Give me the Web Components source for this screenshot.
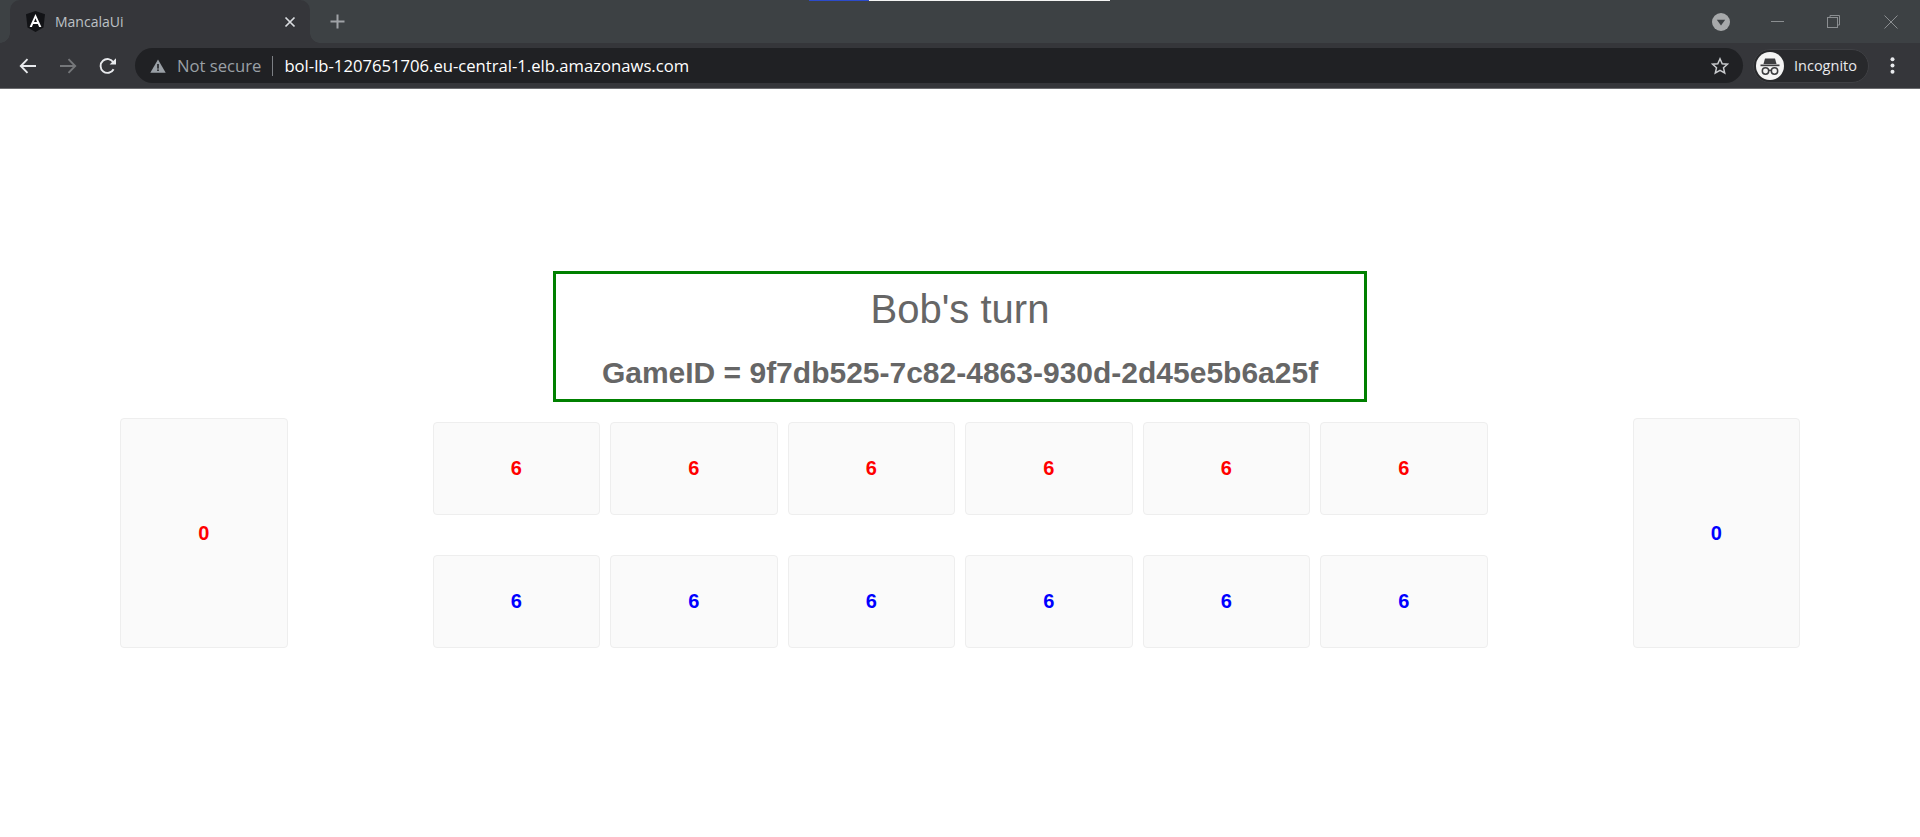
<!DOCTYPE html>
<html lang="en">
<head>
<meta charset="utf-8">
<title>MancalaUi</title>
<style>
  html, body { margin: 0; padding: 0; background: #fff; }
  body { width: 1920px; height: 837px; overflow: hidden; font-family: "Liberation Sans", Arial, sans-serif; }
</style>
</head>
<body>
<browser-window tab-title="MancalaUi" url="bol-lb-1207651706.eu-central-1.elb.amazonaws.com">
  <game-banner game-id="9f7db525-7c82-4863-930d-2d45e5b6a25f">Bob's turn</game-banner>
  <mancala-board></mancala-board>
</browser-window>

<script>
// Browser frame around the page: tab strip, toolbar, then the page in a slot
class BrowserWindow extends HTMLElement {
  constructor() {
    super();
    this.attachShadow({ mode: 'open' });
  }

  connectedCallback() {
    const tabTitle = this.getAttribute('tab-title') || '';
    const url = this.getAttribute('url') || '';

    this.shadowRoot.innerHTML = `
      <style>
        :host { display: block; font-family: "Open Sans", "Noto Sans", sans-serif; }
        svg { display: block; flex: none; }

        .strip {
          position: relative;
          height: 43px;
          display: flex;
          align-items: flex-end;
          padding-left: 10px;
          background: #3d4144;
        }
        .loader {
          position: absolute;
          top: 0;
          left: 809px;
          width: 301px;
          height: 1px;
          display: flex;
        }
        .loader i { display: block; height: 1px; }
        .loader i:first-child { width: 60px; background: #2c4bcb; }
        .loader i:last-child { flex: 1; background: #f4f4f4; }

        .tab {
          position: relative;
          width: 300px;
          height: 43px;
          display: flex;
          align-items: center;
          padding: 0 14px 0 16px;
          box-sizing: border-box;
          background: #35363a;
          border-radius: 10px 10px 0 0;
        }
        /* concave corners where the tab meets the toolbar */
        .tab::before, .tab::after {
          content: "";
          position: absolute;
          bottom: 0;
          width: 10px;
          height: 10px;
        }
        .tab::before { left: -10px; background: radial-gradient(circle at 0 0, transparent 9.5px, #35363a 10px); }
        .tab::after { right: -10px; background: radial-gradient(circle at 100% 0, transparent 9.5px, #35363a 10px); }
        .tab-title {
          flex: 1;
          margin-left: 10px;
          font-size: 14px;
          color: #bdc1c6;
        }
        .new-tab { height: 43px; display: flex; align-items: center; margin-left: 20px; }
        .spacer { flex: 1; }
        .win { display: flex; align-items: center; height: 43px; }
        .win .tabs-menu { margin-right: 41px; }
        .win .min { margin-right: 43px; }
        .win .max { margin-right: 44px; }
        .win .close { margin-right: 22px; }

        .toolbar {
          height: 46px;
          padding-bottom: 1px;
          box-sizing: border-box;
          display: flex;
          align-items: center;
          background: #35363a;
          box-shadow: inset 0 -1px 0 #6b6c6f;
        }
        .nav { display: flex; align-items: center; padding-left: 19px; gap: 22px; width: 135px; box-sizing: border-box; }
        .omnibox {
          width: 1608px;
          height: 35px;
          display: flex;
          align-items: center;
          padding: 0 14px 0 15px;
          box-sizing: border-box;
          border-radius: 18px;
          background: #202124;
          font-size: 16.65px;
        }
        .not-secure { margin-left: 11px; color: #9aa0a6; white-space: nowrap; }
        .sep { width: 1px; height: 20px; margin: 0 11px; background: #7c7f84; }
        .url { flex: 1; color: #fff; white-space: nowrap; }
        .profile {
          width: 116px;
          height: 34px;
          margin-left: 10px;
          display: flex;
          align-items: center;
          padding-left: 2px;
          box-sizing: border-box;
          border: 1px solid #3f4044;
          border-radius: 17px;
          background: #28292c;
          color: #e8eaed;
          font-size: 14.5px;
        }
        .profile span { margin-left: 10px; }
        .menu { margin-left: 21px; }
      </style>

      <div class="strip">
        <div class="loader"><i></i><i></i></div>
        <div class="tab">
          <svg width="19" height="21" viewBox="0 0 19 21">
            <path d="M9.5 0 L19 3.3 L17.5 16.6 L9.5 21 L1.5 16.6 L0 3.3 Z" fill="#121316"/>
            <path d="M9.5 3 L3.6 16 H5.9 L7.1 13 H11.9 L13.1 16 H15.4 Z M8 11 L9.5 7.3 L11 11 Z" fill="#fff" fill-rule="evenodd"/>
          </svg>
          <span class="tab-title">${tabTitle}</span>
          <svg width="12" height="12" viewBox="0 0 12 12">
            <path d="M1.5 1.5 L10.5 10.5 M10.5 1.5 L1.5 10.5" stroke="#dadce0" stroke-width="1.7"/>
          </svg>
        </div>
        <div class="new-tab">
          <svg width="15" height="15" viewBox="0 0 15 15">
            <path d="M7.5 0.5 V14.5 M0.5 7.5 H14.5" stroke="#9fa2a6" stroke-width="2"/>
          </svg>
        </div>
        <div class="spacer"></div>
        <div class="win">
          <svg class="tabs-menu" width="18" height="18" viewBox="0 0 18 18">
            <circle cx="9" cy="9" r="9" fill="#a7a9ab"/>
            <path d="M4.8 6.8 H13.2 L9 12.6 Z" fill="#3d4144"/>
          </svg>
          <svg class="min" width="13" height="1" viewBox="0 0 13 1">
            <rect width="13" height="1" fill="#8b8e91"/>
          </svg>
          <svg class="max" width="13" height="13" viewBox="0 0 13 13" fill="none" stroke="#8b8e91">
            <rect x="0.5" y="2.5" width="10" height="10"/>
            <path d="M3 2.5 V0.5 H12.5 V10 H10.5"/>
          </svg>
          <svg class="close" width="14" height="14" viewBox="0 0 14 14">
            <path d="M0.5 0.5 L13.5 13.5 M13.5 0.5 L0.5 13.5" stroke="#8b8e91" stroke-width="1"/>
          </svg>
        </div>
      </div>

      <div class="toolbar">
        <div class="nav">
          <svg width="18" height="16" viewBox="0 0 18 16" fill="none" stroke="#e8eaed" stroke-width="1.9">
            <path d="M17 8 H2 M8.5 1.2 L1.8 8 L8.5 14.8"/>
          </svg>
          <svg width="18" height="16" viewBox="0 0 18 16" fill="none" stroke="#75777a" stroke-width="1.9">
            <path d="M1 8 H16 M9.5 1.2 L16.2 8 L9.5 14.8"/>
          </svg>
          <svg width="18" height="18" viewBox="0 0 18 18" fill="none">
            <path d="M14.6 12.2 A6.9 6.9 0 1 1 14.4 5.4" stroke="#e8eaed" stroke-width="1.9"/>
            <path d="M17 1.2 V7.6 H10.6 Z" fill="#e8eaed"/>
          </svg>
        </div>
        <div class="omnibox">
          <svg width="16" height="14" viewBox="0 0 16 14">
            <path d="M8 0.5 L15.7 13.7 H0.3 Z" fill="#9aa0a6"/>
            <rect x="7.2" y="5" width="1.6" height="4.6" fill="#202124"/>
            <rect x="7.2" y="10.4" width="1.6" height="1.6" fill="#202124"/>
          </svg>
          <span class="not-secure">Not secure</span>
          <span class="sep"></span>
          <span class="url">${url}</span>
          <svg width="18" height="18" viewBox="0 0 18 18" fill="none" stroke="#c9cbce" stroke-width="1.5">
            <path d="M9 1.8 L11.2 6.7 L16.5 7.2 L12.5 10.8 L13.7 16 L9 13.3 L4.3 16 L5.5 10.8 L1.5 7.2 L6.8 6.7 Z"/>
          </svg>
        </div>
        <div class="profile">
          <svg width="28" height="28" viewBox="0 0 28 28">
            <circle cx="14" cy="14" r="14" fill="#f4f4f4"/>
            <path d="M9 6.5 H19 L20.5 12 H7.5 Z" fill="#3c3d40"/>
            <rect x="4.5" y="12.5" width="19" height="1.7" fill="#3c3d40"/>
            <g fill="none" stroke="#3c3d40" stroke-width="1.5">
              <circle cx="9.5" cy="19" r="3.2"/>
              <circle cx="18.5" cy="19" r="3.2"/>
              <path d="M12.7 18.4 H15.3"/>
            </g>
          </svg>
          <span>Incognito</span>
        </div>
        <svg class="menu" width="5" height="17" viewBox="0 0 5 17" fill="#e8eaed">
          <circle cx="2.5" cy="2.2" r="2"/>
          <circle cx="2.5" cy="8.5" r="2"/>
          <circle cx="2.5" cy="14.8" r="2"/>
        </svg>
      </div>

      <slot></slot>
    `;
  }
}

// Green box with whose turn it is and the game id
class GameBanner extends HTMLElement {
  constructor() {
    super();
    this.attachShadow({ mode: 'open' });
  }

  connectedCallback() {
    const gameId = this.getAttribute('game-id') || '';

    this.shadowRoot.innerHTML = `
      <style>
        :host {
          display: block;
          width: 814px;
          height: 131px;
          margin: 182px auto 0;
          box-sizing: border-box;
          border: 3px solid green;
          text-align: center;
          color: #666;
          font-family: "Liberation Sans", Arial, sans-serif;
        }
        .turn {
          margin: 12px 0 0;
          font-size: 40px;
          font-weight: 400;
          line-height: 46px;
        }
        .game-id {
          margin: 24px 0 0;
          font-size: 30px;
          font-weight: 700;
          line-height: 34px;
        }
      </style>
      <h1 class="turn"><slot></slot></h1>
      <h2 class="game-id">GameID = ${gameId}</h2>
    `;
  }
}

// One pit or store, the count comes in through the slot
class MancalaPit extends HTMLElement {
  constructor() {
    super();
    this.attachShadow({ mode: 'open' });
  }

  connectedCallback() {
    this.shadowRoot.innerHTML = `
      <style>
        :host {
          display: flex;
          align-items: center;
          justify-content: center;
          box-sizing: border-box;
          background: #fafafa;
          border: 1px solid #eeeeee;
          border-radius: 4px;
          font-family: "Liberation Sans", Arial, sans-serif;
          font-size: 20px;
          font-weight: 700;
        }
        :host([player="red"]) { color: red; }
        :host([player="blue"]) { color: blue; }
        :host([kind="store"]) { width: 167.5px; height: 230px; }
        :host([kind="pit"]) { height: 93px; }
      </style>
      <slot></slot>
    `;
  }
}

// Two stores on the sides and two rows of six pits in the middle
class MancalaBoard extends HTMLElement {
  constructor() {
    super();
    this.attachShadow({ mode: 'open' });
  }

  connectedCallback() {
    const row = (player) => Array(6).fill(0)
      .map(() => `<mancala-pit kind="pit" player="${player}">6</mancala-pit>`)
      .join('');

    this.shadowRoot.innerHTML = `
      <style>
        :host {
          display: flex;
          justify-content: space-between;
          align-items: flex-start;
          margin-top: 16px;
          padding: 0 120px;
        }
        .pits {
          width: 1055px;
          margin-top: 4px;
          display: flex;
          flex-direction: column;
          gap: 40px;
        }
        .row {
          display: grid;
          grid-template-columns: repeat(6, 1fr);
          gap: 10px;
        }
      </style>
      <mancala-pit kind="store" player="red">0</mancala-pit>
      <div class="pits">
        <div class="row">${row('red')}</div>
        <div class="row">${row('blue')}</div>
      </div>
      <mancala-pit kind="store" player="blue">0</mancala-pit>
    `;
  }
}

customElements.define('browser-window', BrowserWindow);
customElements.define('game-banner', GameBanner);
customElements.define('mancala-pit', MancalaPit);
customElements.define('mancala-board', MancalaBoard);
</script>
</body>
</html>
